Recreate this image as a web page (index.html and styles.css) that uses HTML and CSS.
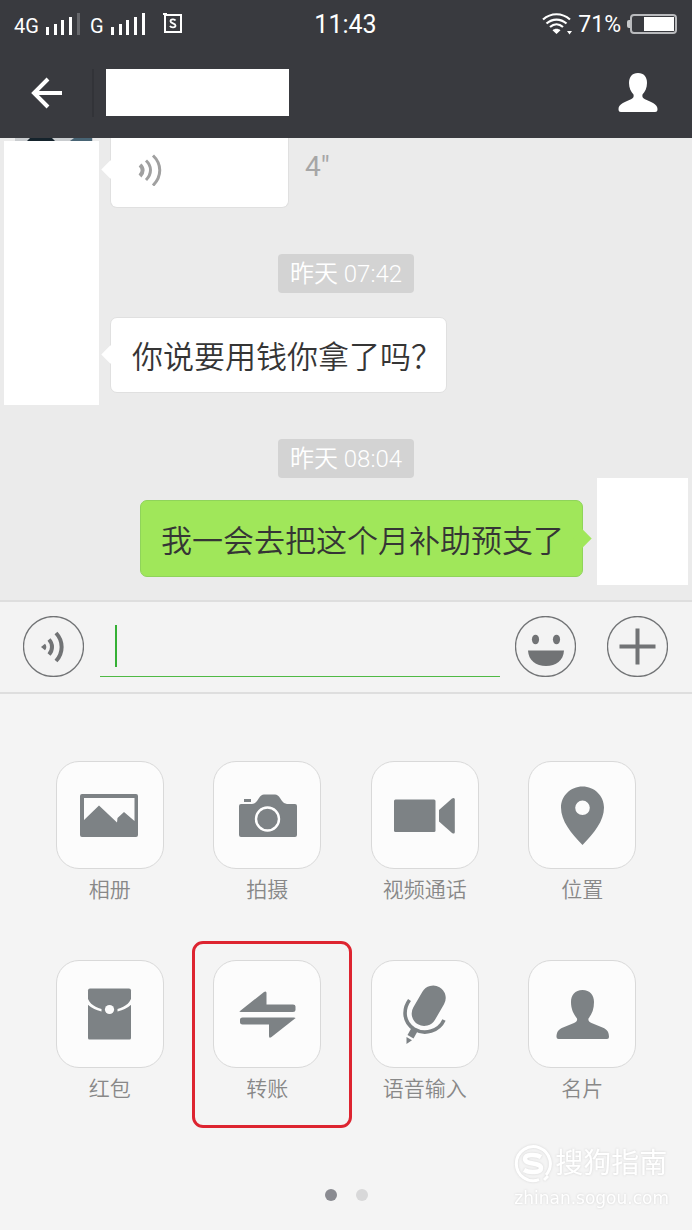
FILE: index.html
```html
<!DOCTYPE html>
<html lang="zh-CN">
<head>
<meta charset="utf-8">
<meta name="viewport" content="width=device-width, initial-scale=1">
<title>聊天</title>
<link rel="stylesheet" href="styles.css">
</head>
<body>
<div class="screen">
  <header class="header">
    <div class="status">
      <div class="status-left">
        <span class="carrier">4G</span>
        <svg class="signal" width="36" height="22" viewBox="0 0 36 22" fill="#fff"><path d="M1 14h3v8H1zM9 11h3v11H9zM16 7h3v15h-3zM24 4h3v18h-3z"/><path d="M32 0h3v22h-3z" fill="#66676b"/></svg>
        <span class="carrier">G</span>
        <svg class="signal" width="36" height="22" viewBox="0 0 36 22" fill="#fff"><path d="M1 14h3v8H1zM9 11h3v11H9zM16 7h3v15h-3zM24 4h3v18h-3zM32 0h3v22h-3z"/></svg>
        <svg class="sim" width="20" height="22" viewBox="0 0 20 22" fill="none" stroke="#fff"><path d="M0 1h4M2 0v19h16V2H2" stroke-width="2"/><path d="M12.500 7.500c-1-1.700-5-1.500-5 .8 0 2.400 5 1.700 5 4.200 0 2.400-4.500 2.400-5.500.3" stroke-width="1.800"/></svg>
      </div>
      <span class="clock">11:43</span>
      <div class="status-right">
        <svg width="30" height="22" viewBox="0 0 30 22" fill="none" stroke="#fff" stroke-width="2.200"><path d="M1 6.500c8-7 19-7 27 0M4.500 10.500c6-5.300 14-5.300 20 0M8 14c4-3.500 9-3.500 13 0"/><path d="M10.500 17.200c2-2 6-2 8 0L14.500 21zM25 18h5l-2.500 3.500z" fill="#fff" stroke="none"/></svg>
        <span class="percent">71%</span>
        <svg width="50" height="20" viewBox="0 0 50 20"><path d="M3 6H2a2 2 0 0 0-2 2v4a2 2 0 0 0 2 2h1z" fill="#c9cacc"/><rect x="4" y="1" width="45" height="18" rx="3" fill="none" stroke="#b9babd" stroke-width="2"/><path d="M17 3h30v14H17z" fill="#fff"/></svg>
      </div>
    </div>
    <nav class="navbar">
      <button class="back" type="button" aria-label="返回"><svg width="32" height="32" viewBox="0 0 32 32" fill="none" stroke="#fff"><path d="M17 2 3 16l14 14" stroke-width="4"/><path d="M3 16h28" stroke-width="4"/></svg></button>
      <div class="contact"></div>
      <button class="profile" type="button" aria-label="联系人资料"><svg width="40" height="40" viewBox="0 0 40 40" fill="#fff"><path d="M20 0c6 0 9 4 9 10 0 5-2 9-4.500 11.500-.5 2 0 3.500 2.500 4.800C33 29 39.500 31 39.500 36c0 2-.5 3-2.500 3H3c-2 0-2.500-1-2.500-3C.500 31 7 29 13 26.300c2.500-1.300 3-2.800 2.500-4.800C13 19 11 15 11 10c0-6 3-10 9-10z"/></svg></button>
    </nav>
  </header>

  <main class="chat">
    <section class="received">
      <div class="cover">
        <svg class="avatar-edge" width="95" height="3" viewBox="0 0 95 3"><path d="M11 0h78v3H11z" fill="#c9cccf"/><path d="M26 0h22l3 3H23z" fill="#15232c"/><path d="M70 0h18v3H66z" fill="#486474"/></svg>
        <div class="cover-block"></div>
      </div>
      <div class="voice">
        <div class="bubble bubble-voice">
          <svg width="26" height="32" viewBox="0 0 26 32" fill="none" stroke="#a0a0a0" stroke-width="3"><path d="M2 11c3.500 3 3.500 7.500 0 11" stroke-width="4"/><path d="M8 6.500c6 5.500 6 13.500 0 19.500M15 1.500c9 8.500 9 21 0 30"/></svg>
        </div>
        <span class="duration">4"</span>
      </div>
      <time class="stamp">昨天 07:42</time>
      <p class="bubble bubble-text">你说要用钱你拿了吗？</p>
    </section>
    <time class="stamp">昨天 08:04</time>
    <section class="sent">
      <p class="bubble bubble-own">我一会去把这个月补助预支了</p>
      <div class="own-cover"></div>
    </section>
  </main>

  <form class="composer">
    <button class="round" type="button" aria-label="语音"><svg width="61" height="61" viewBox="0 0 61 61" fill="none" stroke="#717375"><circle cx="30.500" cy="30.500" r="30" stroke-width="1.300"/><path d="m18 31 4-3.300c1.800 2 1.800 4.600 0 6.600z" fill="#717375" stroke="none"/><path d="M26 23.500c4 4.300 4 10.700 0 15" stroke-width="4"/><path d="M33 17c7.500 8 7.500 20 0 28" stroke-width="4"/></svg></button>
    <label class="field"><input class="message" type="text" aria-label="消息"></label>
    <button class="round" type="button" aria-label="表情"><svg width="61" height="61" viewBox="0 0 61 61"><circle cx="30.500" cy="30.500" r="30" fill="none" stroke="#717375" stroke-width="1.300"/><g fill="#717375"><ellipse cx="20.500" cy="23.500" rx="3.600" ry="4.800"/><ellipse cx="41.500" cy="23.500" rx="3.600" ry="4.800"/><path d="M13 34.500h36c-.5 10-8 15.500-18 15.500s-17.500-5.500-18-15.500z"/></g></svg></button>
    <button class="round round-more" type="button" aria-label="更多"><svg width="61" height="61" viewBox="0 0 61 61" fill="none" stroke="#717375"><circle cx="30.500" cy="30.500" r="30" stroke-width="1.300"/><path d="M12.500 30.500h36M30.500 12.500v36" stroke-width="4"/></svg></button>
  </form>

  <section class="panel">
    <div class="tools">
      <button class="tool" type="button"><span class="tile"><svg width="107" height="107" viewBox="0 0 107 107"><path fill-rule="evenodd" d="M26 32h54q2 0 2 2v39q0 2-2 2H26q-2 0-2-2V34q0-2 2-2zm2 4v22l15-14.500 18 17 .5-4.500 6.500-6 10.500 9V36z"/></svg></span><span class="name">相册</span></button>
      <button class="tool" type="button"><span class="tile"><svg width="107" height="107" viewBox="0 0 107 107"><path d="M30 37h7v3h-7zM27 42h11q3 0 5-3l2-3q2-3.500 5-3.500h11q3 0 5 3.500l2 3q2 3 5 3h8q2 0 2 2v29q0 2-2 2H27q-2 0-2-2V44q0-2 2-2z"/><circle cx="53.500" cy="57" r="11.500" fill="none" stroke="#fff" stroke-width="2.400"/></svg></span><span class="name">拍摄</span></button>
      <button class="tool" type="button"><span class="tile"><svg width="107" height="107" viewBox="0 0 107 107"><rect x="23" y="37.500" width="41.500" height="32.500" rx="1.500"/><path d="M68 48 81 36.500q2.800-1.500 2.800 1V70q0 2.500-2.800 1L68 59.500z"/></svg></span><span class="name">视频通话</span></button>
      <button class="tool" type="button"><span class="tile"><svg width="107" height="107" viewBox="0 0 107 107"><path fill-rule="evenodd" d="M53.500 24.500C65.500 24.500 75 34 75 45.500 75 59 65 71 53.500 83 42 71 32 59 32 45.500 32 34 41.500 24.500 53.500 24.500zm0 14a7.300 7.300 0 1 0 0 14.600 7.300 7.300 0 0 0 0-14.600z"/></svg></span><span class="name">位置</span></button>
      <button class="tool" type="button"><span class="tile"><svg width="107" height="107" viewBox="0 0 107 107"><path d="M34 27.500h39q2 0 2 2V77q0 1.500-1.500 1.500h-40Q32 78.500 32 77V29.500q0-2 2-2z"/><path d="M31 33.500c.5 7.500 6 12 14.500 14.500v2.500Q37 48.500 31 43zM76 33.500c-.5 7.500-6 12-14.500 14.500v2.500Q70 48.500 76 43z" fill="#fcfcfc"/><circle cx="53.500" cy="48.500" r="4.600" fill="#fcfcfc"/></svg></span><span class="name">红包</span></button>
      <button class="tool tool-marked" type="button"><span class="tile"><svg width="107" height="107" viewBox="0 0 107 107"><path d="M26 50 50 31q2.500-1.500 2.500 1v11.500H79q2.500 0 2.500 2V49q0 2-2.500 2H27q-2.500 0-1-1zM81 57.500 57.500 76q-2.500 2-2.500-1V63.500H28.500q-2.500 0-2.500-2V58.500q0-2 2.500-2H80q2.500 0 1 1z"/></svg></span><span class="name">转账</span></button>
      <button class="tool" type="button"><span class="tile"><svg width="107" height="107" viewBox="0 0 107 107"><path d="M62.200 37 53.200 52.500" stroke="#7d8285" stroke-width="25" stroke-linecap="round"/><path d="M38.500 39C32 48 32 61 43 68c11 6.500 25 2 30-9" fill="none" stroke="#7d8285" stroke-width="3.600"/><path d="m41 66 6 3.500-4.500 8-6-3.500zM35.500 76l5.500 3.300-5.500 3.700z"/></svg></span><span class="name">语音输入</span></button>
      <button class="tool" type="button"><span class="tile"><svg width="107" height="107" viewBox="0 0 107 107"><path d="M53.500 29C61 29 65 34 65 41c0 7-2 12-5.500 16.500-.5 2 .5 3.500 3 4.500l11 4.500c5 2 6.500 5 6.500 9.500q0 2-2 2H29.500q-2 0-2-2c0-4.500 1.500-7.500 6.500-9.500L45 62c2.500-1 3.500-2.500 3-4.500C44.500 53 42 48 42 41c0-7 4-12 11.500-12z"/></svg></span><span class="name">名片</span></button>
    </div>
    <div class="pages"><i class="dot dot-on"></i><i class="dot"></i></div>
    <div class="watermark">
      <div class="brand"><svg width="38" height="38" viewBox="0 0 38 38" fill="none" stroke="#fff"><path d="M32 30A17 17 0 1 0 25 34.700M30 35l4-4" stroke-width="3"/><path d="M27 12c-5-3-16-3-16 2 0 6 16 3 16 9 0 5-12 5-17 2" stroke-width="4.500"/></svg><span>搜狗指南</span></div>
      <div class="site">zhinan.sogou.com</div>
    </div>
  </section>
</div>
</body>
</html>
```
FILE: styles.css
```css
* { box-sizing: border-box; }

body {
  margin: 0;
  background: #f4f4f4;
  color: #353535;
  font-family: Roboto, "Noto Sans CJK SC", sans-serif;
}

p { margin: 0; }
svg { display: block; flex: none; }

button {
  padding: 0;
  border: 0;
  background: none;
  color: inherit;
  font: inherit;
  cursor: pointer;
}

.screen {
  display: flex;
  flex-direction: column;
  min-height: 100vh;
}

/* Status bar and navigation */
.header {
  height: 138px;
  background: #393a3f;
  color: #fff;
}

.status {
  display: grid;
  grid-template-columns: 1fr auto 1fr;
  align-items: center;
  height: 48px;
  padding: 0 15px 0 14px;
}

.status-left, .status-right {
  display: flex;
  align-items: center;
}

.status-left { gap: 6px; }
.status-right { justify-content: flex-end; gap: 6px; }
.carrier { padding-top: 4px; font-size: 20px; line-height: 24px; }
.signal { margin-right: 3px; }
.sim { margin-left: 8px; }
.clock { padding-top: 2px; font-size: 25px; line-height: 30px; }
.percent { padding-top: 1px; font-size: 23px; line-height: 28px; }

.navbar {
  display: flex;
  align-items: center;
  height: 90px;
  padding: 0 34px 1px 31px;
}

.back {
  display: flex;
  align-items: center;
  width: 63px;
  height: 48px;
  border-right: 2px solid #323338;
}

.contact {
  width: 183px;
  height: 47px;
  margin-left: 12px;
  background: #fff;
}

.profile { margin-left: auto; }

/* Conversation */
.chat {
  display: flex;
  flex-direction: column;
  height: 462px;
  background: #ebebeb;
}

.received {
  display: grid;
  grid-template-columns: 95px 1fr;
  grid-template-rows: 70px auto 1fr;
  column-gap: 11px;
  padding-left: 4px;
}

.cover { grid-column: 1; grid-row: 1 / 4; }
.cover-block { height: 264px; background: #fff; }

.voice {
  display: flex;
  grid-column: 2;
  grid-row: 1;
}

.stamp {
  align-self: center;
  justify-self: center;
  margin: 34px 0 0;
  padding: 5px 12px 4px;
  border-radius: 4px;
  background: #d3d3d3;
  color: #fff;
  font-size: 24px;
  font-weight: 350;
  line-height: 30px;
}

.received .stamp {
  grid-column: 1 / 3;
  grid-row: 2;
  margin: 46px 4px 24px 0;
}

.bubble {
  position: relative;
  border: 1px solid #e0e0e0;
  border-radius: 7px;
  background: #fff;
  font-size: 31px;
  font-weight: 350;
  line-height: 36px;
}

.bubble::before {
  position: absolute;
  width: 13px;
  height: 13px;
  background: inherit;
  content: "";
  transform: rotate(45deg);
}

.bubble-voice {
  width: 179px;
  padding: 16px 27px;
  border-top: 0;
  border-radius: 0 0 7px 7px;
}

.bubble-voice::before { top: 25px; left: -7px; }

.duration {
  padding: 12px 16px;
  color: #a6a6a6;
  font-size: 28px;
  line-height: 34px;
}

.bubble-text {
  grid-column: 2;
  grid-row: 3;
  justify-self: start;
  align-self: start;
  padding: 22px 4px 16px 21px;
}

.bubble-text::before { top: 30px; left: -7px; }

.sent {
  display: flex;
  justify-content: flex-end;
  gap: 14px;
  padding-right: 4px;
}

.bubble-own {
  align-self: flex-start;
  margin-top: 22px;
  padding: 23px 18px 16px 20px;
  border-color: #8fd45a;
  background: #a0e75a;
}

.bubble-own::before { top: 31px; right: -7px; }

.own-cover {
  width: 91px;
  height: 107px;
  background: #fff;
}

/* Message composer */
.composer {
  display: flex;
  align-items: center;
  height: 94px;
  padding: 0 24px 2px 23px;
  border-top: 2px solid #dedede;
  border-bottom: 2px solid #dedede;
  background: #f3f3f3;
}

.field {
  position: relative;
  flex: 1;
  height: 61px;
  margin: 0 15px 0 16px;
  border-bottom: 1px solid #4fb944;
}

.field::before {
  position: absolute;
  top: 9px;
  left: 15px;
  width: 2px;
  height: 42px;
  background: #35b035;
  content: "";
}

.message {
  width: 100%;
  height: 100%;
  padding: 0 16px;
  border: 0;
  outline: 0;
  background: transparent;
  font: inherit;
  font-size: 31px;
}

.round-more { margin-left: 31px; }

/* Attachment tools */
.panel {
  position: relative;
  flex: 1;
  padding: 67px 31px 0;
}

.tools {
  display: grid;
  grid-template-columns: repeat(4, 1fr);
  row-gap: 55px;
}

.tool {
  position: relative;
  display: flex;
  flex-direction: column;
  align-items: center;
}

.tool-marked::after {
  position: absolute;
  inset: -19px -6px -24px 3px;
  border: 3px solid #dd2430;
  border-radius: 11px;
  content: "";
}

.tile {
  display: flex;
  align-items: center;
  justify-content: center;
  width: 108px;
  height: 108px;
  border: 1px solid #d9d9d9;
  border-radius: 23px;
  background: #fcfcfc;
  fill: #7d8285;
}

.name {
  padding-top: 7px;
  color: #888;
  font-size: 21px;
  font-weight: 350;
  line-height: 29px;
}

.pages {
  display: flex;
  justify-content: center;
  gap: 19px;
  margin-top: 85px;
}

.dot {
  width: 12px;
  height: 12px;
  border-radius: 50%;
  background: #d8d8d9;
}

.dot-on { background: #8a8b91; }

.watermark {
  position: absolute;
  right: 23px;
  bottom: 22px;
  color: #fff;
  filter: drop-shadow(0 0 1px #d4d4d4);
}

.brand {
  display: flex;
  align-items: center;
  gap: 3px;
  font-size: 28px;
  line-height: 38px;
}

.site {
  padding-top: 5px;
  font-family: "DejaVu Sans", sans-serif;
  font-size: 17px;
  line-height: 20px;
}
```
